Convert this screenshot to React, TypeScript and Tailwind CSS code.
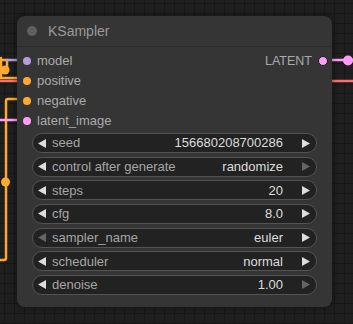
import React from "react";

type Slot = { name: string; color: string };
type Widget = { label: string; value: string; leftOff?: boolean; rightOff?: boolean };

const inputs: Slot[] = [
  { name: "model", color: "bg-[#b39ddb]" },
  { name: "positive", color: "bg-[#ffa931]" },
  { name: "negative", color: "bg-[#ffa931]" },
  { name: "latent_image", color: "bg-[#ff9cf9]" },
];

const widgets: Widget[] = [
  { label: "seed", value: "156680208700286" },
  { label: "control after generate", value: "randomize", rightOff: true },
  { label: "steps", value: "20" },
  { label: "cfg", value: "8.0" },
  { label: "sampler_name", value: "euler", leftOff: true },
  { label: "scheduler", value: "normal" },
  { label: "denoise", value: "1.00", rightOff: true },
];

function Arrow({ dir, off }: { dir: "left" | "right"; off?: boolean }) {
  return (
    <svg width="8" height="9" viewBox="0 0 8 9" className="shrink-0">
      <polygon
        points={dir === "left" ? "0,4.5 8,0 8,9" : "0,0 8,4.5 0,9"}
        fill={off ? "#656565" : "#dddddd"}
      />
    </svg>
  );
}

// wires drawn on the canvas behind the node
function Wires() {
  return (
    <svg className="absolute inset-0" width="353" height="324" viewBox="0 0 353 324">
      <g fill="none" strokeWidth="2.5" strokeLinecap="round">
        <path d="M0 60 H7 V68" stroke="#ffa931" />
        <path d="M1 58 V78" stroke="#ffa931" />
        <path d="M0 78 H17" stroke="#ffa931" />
        <path d="M7 60 H17" stroke="#b39ddb" />
        <path d="M0 81 H17" stroke="#ff6e6e" />
        <path d="M17 99 H8 Q6 99 6 101 V258 Q6 260 4 260 H0" stroke="#ffa931" />
        <path d="M0 120 H17" stroke="#ff9cf9" />
        <path d="M327 60 H353" stroke="#ff9cf9" />
        <path d="M332 81 H353" stroke="#ff6e6e" />
      </g>
      <circle cx="5" cy="70" r="4.5" fill="#ffa931" />
      <circle cx="5.5" cy="182" r="4.5" fill="#ffa931" />
      <circle cx="348" cy="60.5" r="5" fill="#ff9cf9" />
    </svg>
  );
}

function App() {
  return (
    <div className="relative h-[324px] w-[353px] overflow-hidden bg-[#1f1f1f] bg-[linear-gradient(to_right,#171717_1px,transparent_1px),linear-gradient(to_bottom,#171717_1px,transparent_1px)] bg-[size:10px_10px] bg-[position:4px_3px] pl-[17px] pt-[16px] font-['Liberation_Sans',Arial,sans-serif]">
      <Wires />
      <div className="relative flex h-[291px] w-[315px] flex-col rounded-[8px] bg-[#353535] shadow-[0_0_6px_rgba(0,0,0,0.45)]">
        <div className="flex h-[31px] items-center border-b border-[#2b2b2b] pl-[10px]">
          <div className="h-[10px] w-[10px] rounded-full bg-[#5f5f5f]" />
          <span className="ml-[11px] text-[14px] text-[#999]">KSampler</span>
        </div>

        <div className="flex justify-between pt-[4px]">
          <div className="flex flex-col">
            {inputs.map((s) => (
              <div key={s.name} className="flex h-5 items-center gap-[6px] pl-[6px]">
                <div className={`h-2 w-2 rounded-full ${s.color}`} />
                <span className="text-[13px] text-[#aaa]">{s.name}</span>
              </div>
            ))}
          </div>
          <div className="flex flex-col">
            <div className="flex h-5 items-center gap-[6px] pr-[4px]">
              <span className="text-[12.5px] text-[#aaa]">LATENT</span>
              <div className="h-[10px] w-[10px] rounded-full border border-[#1a1a1a] bg-[#ff9cf9]" />
            </div>
          </div>
        </div>

        <div className="mt-[2px] flex flex-col gap-[3.67px] px-[15px]">
          {widgets.map((w) => (
            <div
              key={w.label}
              className="flex h-5 items-center rounded-full border border-[#535353] bg-[#222] pl-[5px] pr-[6px] text-[13px]"
            >
              <Arrow dir="left" off={w.leftOff} />
              <span className="ml-[6px] text-[#a6a6a6]">{w.label}</span>
              <span className="flex-1 text-right text-[#dddddd]">{w.value}</span>
              <div className="ml-[19px]">
                <Arrow dir="right" off={w.rightOff} />
              </div>
            </div>
          ))}
        </div>
      </div>
    </div>
  );
}

export default App;
